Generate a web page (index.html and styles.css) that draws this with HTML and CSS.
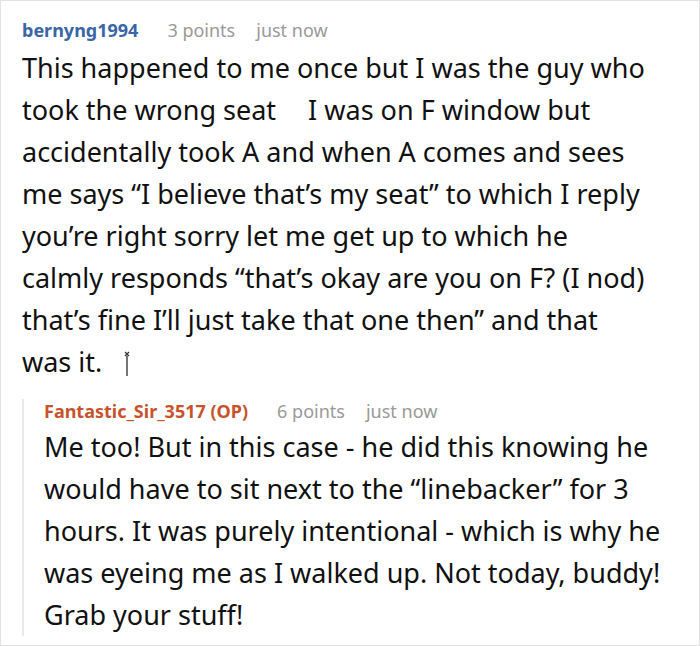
FILE: index.html
```html
<!DOCTYPE html>
<html>
<head>
<meta charset="utf-8">
<link rel="stylesheet" href="styles.css">
</head>
<body>
<div class="frame">
  <div class="comment">
    <div class="meta"><span class="user">bernyng1994</span><span class="info">3 points</span><span class="info">just now</span></div>
    <p class="text">This happened to me once but I was the guy who<br>took the wrong seat <span class="gap"></span> I was on F window but<br>accidentally took A and when A comes and sees<br>me says “I believe that’s my seat” to which I reply<br>you’re right sorry let me get up to which he<br>calmly responds “that’s okay are you on F? (I nod)<br>that’s fine I’ll just take that one then” and that<br>was it. <span class="glyph"><svg width="8" height="25" viewBox="0 0 8 25"><path d="M2 1 L6 5 M6 1 L2 5" stroke="#333" stroke-width="1.2"/><rect x="3.2" y="4.5" width="1.6" height="20.5" fill="#555"/></svg></span></p>
    <div class="reply">
      <div class="meta"><span class="user op">Fantastic_Sir_3517 (OP)</span><span class="info">6 points</span><span class="info">just now</span></div>
      <p class="text">Me too! But in this case - he did this knowing he<br>would have to sit next to the “linebacker” for 3<br>hours. It was purely intentional - which is why he<br>was eyeing me as I walked up. Not today, buddy!<br>Grab your stuff!</p>
    </div>
  </div>
</div>
</body>
</html>
```
FILE: styles.css
```css
html, body {
  margin: 0;
  padding: 0;
  background: #fff;
}
body {
  font-family: "Noto Sans", "Open Sans", sans-serif;
  color: #111;
}
.frame {
  width: 700px;
  height: 646px;
  box-sizing: border-box;
  border: 1px solid #e2e2e2;
  padding: 17px 4px 0 21px;
  overflow: hidden;
}
.meta {
  display: flex;
  font-size: 18px;
  line-height: 24px;
  align-items: baseline;
  white-space: nowrap;
}
.user {
  font-weight: 700;
  color: #3b66a6;
  margin-right: 29px;
}
.user.op {
  color: #c8532b;
}
.info {
  color: #999;
  margin-right: 21px;
}
.text {
  margin: 5px 0 0 0;
  font-size: 27px;
  line-height: 42px;
  white-space: nowrap;
}
.gap {
  display: inline-block;
  width: 18px;
}
.glyph {
  display: inline-block;
  vertical-align: -4px;
  margin-left: 14px;
}
.reply {
  margin-top: 12px;
  border-left: 2px solid #e8e8e8;
  padding-left: 20px;
}
.reply .text {
  margin-top: 3px;
  margin-bottom: -10px;
}
```
